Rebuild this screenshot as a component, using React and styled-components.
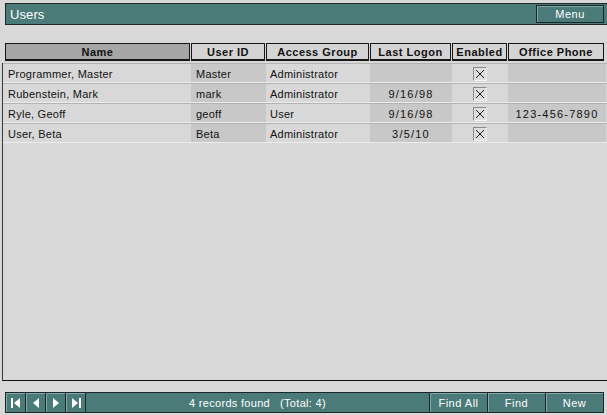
import React from "react";
import styled, { createGlobalStyle } from "styled-components";

const Global = createGlobalStyle`
  html, body { margin: 0; padding: 0; background: #d8d8d8; }
  body { font-family: "Liberation Sans", Arial, sans-serif; }
`;

const TEAL = "#4a7b79";
const DARK = "#1b2727";

const Window = styled.div`
  width: 607px;
  height: 415px;
  box-sizing: border-box;
  padding-top: 3px;
  display: flex;
  flex-direction: column;
  background: #d8d8d8;
  overflow: hidden;
`;

const TitleBar = styled.div`
  margin-left: 5px;
  height: 22px;
  box-sizing: border-box;
  border: 1px solid ${DARK};
  border-right: none;
  background: ${TEAL};
  display: flex;
  align-items: center;
  justify-content: space-between;
  padding-left: 4px;
  padding-right: 3px;
`;

const Title = styled.span`
  color: #fff;
  font-size: 13px;
  letter-spacing: 0.1px;
`;

const TealButton = styled.button`
  font-family: "Liberation Sans", Arial, sans-serif;
  font-size: 11px;
  letter-spacing: 0.5px;
  color: #fff;
  background: ${TEAL};
  border: 1px solid ${DARK};
  box-shadow: inset 1px 1px 0 #7fa8a6;
  height: ${(p) => p.$h || 18}px;
  width: ${(p) => p.$w}px;
  padding: 0;
  margin: 0;
  display: flex;
  align-items: center;
  justify-content: center;
  cursor: pointer;
`;

const cols = "186px 75px 104px 82px 56px 96px";

const HeaderRow = styled.div`
  margin-top: 18px;
  margin-left: 5px;
  display: grid;
  grid-template-columns: ${cols};
  height: 18px;
`;

const HeaderCell = styled.div`
  box-sizing: border-box;
  border: 1px solid #161616;
  border-bottom-width: 2px;
  margin-right: 1px;
  background: ${(p) => (p.$active ? "#a6a6a6" : "#d4d4d4")};
  font-weight: bold;
  font-size: 11px;
  letter-spacing: 0.5px;
  color: #111;
  display: flex;
  align-items: center;
  justify-content: center;
  &:last-child { margin-right: 0; }
`;

const Portal = styled.div`
  margin-top: 2px;
  margin-left: 2px;
  flex: 1;
  border-left: 1px solid #3a3a3a;
  border-bottom: 1px solid #111;
  display: flex;
  flex-direction: column;
`;

const Row = styled.div`
  display: grid;
  grid-template-columns: 188px 75px 104px 82px 56px 98px;
  height: 20px;
  box-sizing: border-box;
  border-top: 1px solid #b3b3b3;
  border-bottom: 1px solid #ececec;
`;

const Cell = styled.div`
  background: ${(p) => (p.$shade ? "#c8c8c8" : "transparent")};
  font-size: 11px;
  letter-spacing: ${(p) => (p.$num ? "1.2px" : "0.25px")};
  color: #111;
  display: flex;
  align-items: center;
  justify-content: ${(p) => (p.$center ? "center" : "flex-start")};
  padding-left: ${(p) => (p.$center ? 0 : p.$pad || 4)}px;
  padding-top: 1px;
  white-space: nowrap;
`;

const Check = styled.div`
  width: 14px;
  height: 14px;
  box-sizing: border-box;
  border: 1px solid #8a8a8a;
  border-right-color: #f4f4f4;
  border-bottom-color: #f4f4f4;
  background: #dedede;
  display: flex;
  align-items: center;
  justify-content: center;
`;

const Footer = styled.div`
  margin: 11px 3px 2px 5px;
  height: 21px;
  box-sizing: border-box;
  border: 1px solid ${DARK};
  background: ${TEAL};
  display: flex;
  align-items: stretch;
`;

const NavGroup = styled.div`
  display: flex;
`;

const NavButton = styled.button`
  width: 20px;
  padding: 0;
  margin: 0;
  background: ${TEAL};
  border: none;
  border-right: 1px solid ${DARK};
  box-shadow: inset 1px 1px 0 #7fa8a6;
  display: flex;
  align-items: center;
  justify-content: center;
  cursor: pointer;
`;

const Status = styled.div`
  flex: 1;
  color: #fff;
  font-size: 11px;
  letter-spacing: 0.3px;
  display: flex;
  align-items: center;
  justify-content: center;
  white-space: pre;
`;

const ActionGroup = styled.div`
  display: flex;
`;

const ActionButton = styled(TealButton)`
  height: 100%;
  border-top: none;
  border-bottom: none;
  border-right: none;
`;

const XMark = () => (
  <svg width="10" height="10" viewBox="0 0 10 10">
    <path d="M1 1 L9 9 M9 1 L1 9" stroke="#222" strokeWidth="1" fill="none" />
  </svg>
);

const NavIcon = ({ kind }) => {
  const paths = {
    first: (
      <>
        <rect x="2" y="2" width="2" height="10" fill="#fff" />
        <path d="M11 2 L5 7 L11 12 Z" fill="#fff" />
      </>
    ),
    prev: <path d="M10 2 L4 7 L10 12 Z" fill="#fff" />,
    next: <path d="M4 2 L10 7 L4 12 Z" fill="#fff" />,
    last: (
      <>
        <path d="M3 2 L9 7 L3 12 Z" fill="#fff" />
        <rect x="10" y="2" width="2" height="10" fill="#fff" />
      </>
    ),
  };
  return (
    <svg width="14" height="14" viewBox="0 0 14 14">
      {paths[kind]}
    </svg>
  );
};

const users = [
  { name: "Programmer, Master", id: "Master", group: "Administrator", logon: "", phone: "" },
  { name: "Rubenstein, Mark", id: "mark", group: "Administrator", logon: "9/16/98", phone: "" },
  { name: "Ryle, Geoff", id: "geoff", group: "User", logon: "9/16/98", phone: "123-456-7890" },
  { name: "User, Beta", id: "Beta", group: "Administrator", logon: "3/5/10", phone: "" },
];

export default function App() {
  return (
    <>
      <Global />
      <Window>
        <TitleBar>
          <Title>Users</Title>
          <TealButton $w={68} $h={18}>Menu</TealButton>
        </TitleBar>
        <HeaderRow>
          <HeaderCell $active>Name</HeaderCell>
          <HeaderCell>User ID</HeaderCell>
          <HeaderCell>Access Group</HeaderCell>
          <HeaderCell>Last Logon</HeaderCell>
          <HeaderCell>Enabled</HeaderCell>
          <HeaderCell>Office Phone</HeaderCell>
        </HeaderRow>
        <Portal>
          {users.map((u) => (
            <Row key={u.name}>
              <Cell $pad={5}>{u.name}</Cell>
              <Cell $shade $pad={5}>{u.id}</Cell>
              <Cell>{u.group}</Cell>
              <Cell $shade $center $num>{u.logon}</Cell>
              <Cell $center>
                <Check>
                  <XMark />
                </Check>
              </Cell>
              <Cell $shade $center $num>{u.phone}</Cell>
            </Row>
          ))}
        </Portal>
        <Footer>
          <NavGroup>
            <NavButton aria-label="First"><NavIcon kind="first" /></NavButton>
            <NavButton aria-label="Previous"><NavIcon kind="prev" /></NavButton>
            <NavButton aria-label="Next"><NavIcon kind="next" /></NavButton>
            <NavButton aria-label="Last"><NavIcon kind="last" /></NavButton>
          </NavGroup>
          <Status>{"4 records found   (Total: 4)"}</Status>
          <ActionGroup>
            <ActionButton $w={58}>Find All</ActionButton>
            <ActionButton $w={58}>Find</ActionButton>
            <ActionButton $w={58}>New</ActionButton>
          </ActionGroup>
        </Footer>
      </Window>
    </>
  );
}
